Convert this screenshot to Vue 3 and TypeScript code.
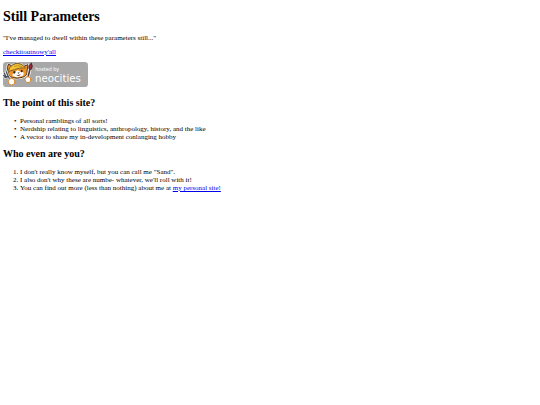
<script setup lang="ts">
const topics: string[] = [
  'Personal ramblings of all sorts!',
  'Nerdship relating to linguistics, anthropology, history, and the like',
  'A vector to share my in-development conlanging hobby',
]
</script>

<template>
  <main class="page">
    <h1>Still Parameters</h1>
    <p>"I've managed to dwell within these parameters still..."</p>
    <p><a href="#checkitout">checkitoutnowy'all</a></p>
    <a class="badge" href="#neocities">
      <svg viewBox="0 0 255 75" role="img" aria-label="hosted by neocities">
        <rect width="255" height="75" rx="10" fill="#a8a8a8" />
        <g stroke-linejoin="round" stroke-linecap="round">
          <path d="M16 7 Q11 15 15 28 Q14 43 29 47 Q43 51 58 46 Q74 42 72 27 L75 8 L62 13 Q52 3 38 5 Q31 6 27 11Z" fill="#f5a02c" stroke="#fff" stroke-width="6" />
          <path d="M16 7 Q11 15 15 28 Q14 43 29 47 Q43 51 58 46 Q74 42 72 27 L75 8 L62 13 Q52 3 38 5 Q31 6 27 11Z" fill="#f09427" stroke="#4b3424" stroke-width="3" />
          <path d="M30 35 Q38 32 43 24 Q50 29 61 31 Q65 40 55 43 Q42 48 30 43 Q26 38 30 35Z" fill="#fff" />
          <path d="M17 25 Q21 9 38 5 Q56 2 67 18 Q48 16 34 23 L18 28Z" fill="#f3c333" stroke="#80602a" stroke-width="3" />
          <path d="M34 13 Q47 8 58 14" fill="none" stroke="#a37a26" stroke-width="2" />
          <ellipse cx="34" cy="31" rx="3" ry="4" fill="#33251f" />
          <ellipse cx="56" cy="27" rx="3" ry="4" fill="#33251f" />
          <path d="M43 32 L50 31 L47 35Z" fill="#33251f" />
          <path d="M40 38 Q46 40 53 36 Q52 42 46 42 Q42 42 40 38Z" fill="#913f2a" />
          <path d="M4 33 L9 44 L16 43 L22 57 M10 29 L15 42 M1 40 L7 47" fill="none" stroke="#fff" stroke-width="7" />
          <path d="M4 33 L9 44 L16 43 L22 57 M10 29 L15 42 M2 40 L7 47 L14 44" fill="none" stroke="#4a5157" stroke-width="4" />
          <path d="M83 14 L74 51" stroke="#fff" stroke-width="9" />
          <path d="M82 17 L74 50" stroke="#503629" stroke-width="5" />
          <path d="M85 4 Q75 11 78 20 L85 22 Q91 12 85 4Z" fill="#a22b35" stroke="#53222b" stroke-width="3" />
          <circle cx="26" cy="59" r="10" fill="#fff" stroke="#d9872d" stroke-width="3" />
          <circle cx="75" cy="53" r="9" fill="#fff" stroke="#d9872d" stroke-width="3" />
        </g>
        <text class="hosted" x="97" y="27">hosted by</text>
        <text class="brand" x="96" y="60">neocities</text>
      </svg>
    </a>
    <h2>The point of this site?</h2>
    <ul>
      <li v-for="topic in topics" :key="topic">{{ topic }}</li>
    </ul>
    <h2>Who even are you?</h2>
    <ol>
      <li>I don't really know myself, but you can call me "Sand".</li>
      <li>I also don't why these are numbe- whatever, we'll roll with it!</li>
      <li>You can find out more (less than nothing) about me at <a href="#personal">my personal site!</a></li>
    </ol>
  </main>
</template>

<style>
body {
  margin: 0;
  background: #fff;
}
</style>

<style scoped>
.page {
  display: flow-root;
  padding: 0 3px;
  font: 7px/8px "Liberation Serif", "Times New Roman", serif;
  color: #000;
}
h1 {
  margin: 9px 0 9px;
  font-size: 14px;
  line-height: 16px;
}
p {
  margin: 0 0 6px;
}
a {
  color: #0000ee;
}
.badge {
  display: block;
  width: 85px;
}
.badge svg {
  display: block;
  width: 100%;
}
.hosted,
.brand {
  fill: #fff;
  font-family: "DejaVu Sans Condensed", "Open Sans", sans-serif;
}
.hosted {
  font-size: 16px;
}
.brand {
  font-size: 34px;
}
h2 {
  margin: 10px 0 8px;
  font-size: 10px;
  line-height: 12px;
}
ul,
ol {
  margin: 0;
  padding-left: 17px;
}
ul {
  list-style-type: "•\00a0\00a0";
}
ul + h2 {
  margin-top: 7px;
}
</style>
